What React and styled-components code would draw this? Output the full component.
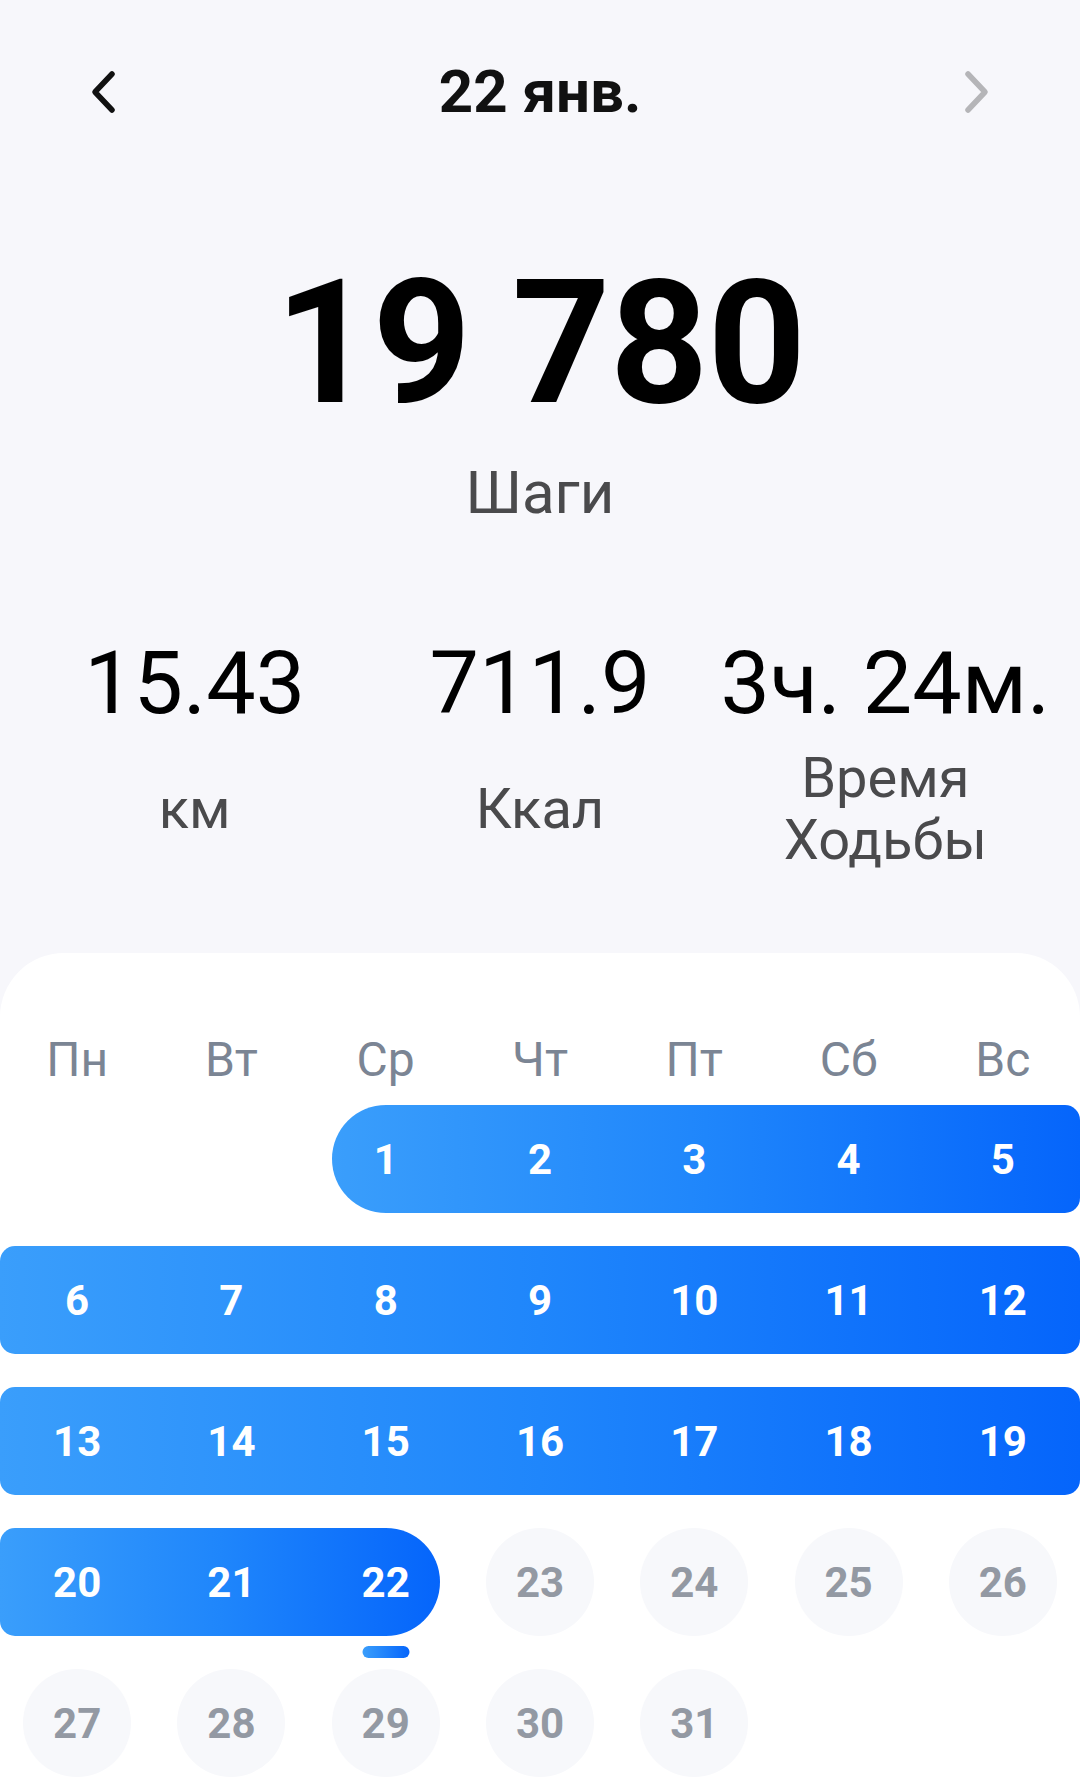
import React from 'react'
import styled, { createGlobalStyle } from 'styled-components'

const TODAY = 22
const RANGE_START = 1

const weekDays = ['Пн', 'Вт', 'Ср', 'Чт', 'Пт', 'Сб', 'Вс']

const weeks = [
  [null, null, 1, 2, 3, 4, 5],
  [6, 7, 8, 9, 10, 11, 12],
  [13, 14, 15, 16, 17, 18, 19],
  [20, 21, 22, 23, 24, 25, 26],
  [27, 28, 29, 30, 31, null, null],
]

const stats = [
  { value: '15.43', label: ['км'] },
  { value: '711.9', label: ['Ккал'] },
  { value: '3ч. 24м.', label: ['Время', 'Ходьбы'] },
]

const Chevron = ({ dir, color }) => (
  <svg width='30' height='46' viewBox='0 0 30 46'>
    <path
      d={dir === 'left' ? 'M24 5 L7 23 L24 41' : 'M6 5 L23 23 L6 41'}
      fill='none'
      stroke={color}
      strokeWidth='5.5'
      strokeLinecap='round'
      strokeLinejoin='round'
    />
  </svg>
)

const Cell = ({ day }) => {
  if (day === null) return <DayCell />
  const selected = day >= RANGE_START && day <= TODAY
  return (
    <DayCell>
      <DayNum $selected={selected}>
        {day}
        {day === TODAY && <TodayMark />}
      </DayNum>
    </DayCell>
  )
}

const WeekRow = ({ days }) => {
  const idx = days.map((d, i) => (d !== null && d <= TODAY ? i : -1)).filter(i => i >= 0)
  if (!idx.length) {
    return (
      <Week>
        {days.map((d, i) => <Cell key={i} day={d} />)}
      </Week>
    )
  }
  const first = idx[0]
  const last = idx[idx.length - 1]
  return (
    <Week>
      {days.slice(0, first).map((d, i) => <Cell key={'a' + i} day={d} />)}
      <Band
        $from={first + 1}
        $to={last + 2}
        $count={last - first + 1}
        $capStart={days[first] === RANGE_START}
        $capEnd={days[last] === TODAY}
      >
        {days.slice(first, last + 1).map(d => <Cell key={d} day={d} />)}
      </Band>
      {days.slice(last + 1).map((d, i) => <Cell key={'b' + i} day={d} />)}
    </Week>
  )
}

export default function App() {
  return (
    <>
      <GlobalStyle />
      <Page>
        <Header>
          <NavButton><Chevron dir='left' color='#111' /></NavButton>
          <Title>22 янв.</Title>
          <NavButton><Chevron dir='right' color='#b5b5b8' /></NavButton>
        </Header>

        <Steps>19 780</Steps>
        <StepsLabel>Шаги</StepsLabel>

        <Stats>
          {stats.map(s => (
            <Stat key={s.value}>
              <StatValue>{s.value}</StatValue>
              <StatLabel>
                {s.label.map(l => <span key={l}>{l}</span>)}
              </StatLabel>
            </Stat>
          ))}
        </Stats>

        <Calendar>
          <WeekHeader>
            {weekDays.map(d => <WeekDay key={d}>{d}</WeekDay>)}
          </WeekHeader>
          <Weeks>
            {weeks.map((w, i) => <WeekRow key={i} days={w} />)}
          </Weeks>
        </Calendar>
      </Page>
    </>
  )
}

const GlobalStyle = createGlobalStyle`
  body {
    margin: 0;
    background: #f7f7fb;
    font-family: Roboto, 'Noto Sans', sans-serif;
  }
`

const Page = styled.div`
  width: 1080px;
  min-height: 1788px;
  display: flex;
  flex-direction: column;
  background: #f7f7fb;
`

const Header = styled.header`
  height: 184px;
  padding: 0 88px;
  display: flex;
  align-items: center;
  justify-content: space-between;
`

const NavButton = styled.div`
  width: 30px;
  height: 46px;
  display: flex;
`

const Title = styled.h1`
  margin: 0;
  font-size: 60px;
  line-height: 60px;
  font-weight: 700;
  color: #111;
`

const Steps = styled.div`
  margin-top: 73px;
  text-align: center;
  font-size: 172px;
  line-height: 172px;
  font-weight: 700;
  color: #000;
  letter-spacing: -1px;
`

const StepsLabel = styled.div`
  margin-top: 34px;
  text-align: center;
  font-size: 60px;
  line-height: 60px;
  color: #4a4a4c;
`

const Stats = styled.div`
  margin-top: 116px;
  padding: 0 22px;
  display: grid;
  grid-template-columns: repeat(3, 1fr);
`

const Stat = styled.div`
  display: flex;
  flex-direction: column;
  align-items: center;
`

const StatValue = styled.div`
  font-size: 88px;
  line-height: 88px;
  color: #000;
  white-space: nowrap;
`

const StatLabel = styled.div`
  margin-top: 20px;
  height: 124px;
  display: flex;
  flex-direction: column;
  justify-content: center;
  align-items: center;
  font-size: 56px;
  line-height: 62px;
  color: #4a4a4c;
`

const Calendar = styled.section`
  flex: 1;
  margin-top: 82px;
  padding-top: 83px;
  background: #fff;
  border-radius: 64px 64px 0 0;
`

const WeekHeader = styled.div`
  display: grid;
  grid-template-columns: repeat(7, 1fr);
`

const WeekDay = styled.div`
  text-align: center;
  font-size: 48px;
  line-height: 48px;
  color: #7b8594;
`

const Weeks = styled.div`
  margin-top: 21px;
  display: flex;
  flex-direction: column;
  gap: 33px;
`

const Week = styled.div`
  display: grid;
  grid-template-columns: repeat(7, 1fr);
  height: 108px;
`

const Band = styled.div`
  grid-column: ${p => p.$from} / ${p => p.$to};
  position: relative;
  display: grid;
  grid-template-columns: repeat(${p => p.$count}, 1fr);

  &::before {
    content: '';
    position: absolute;
    top: 0;
    bottom: 0;
    left: ${p => (p.$capStart ? '23px' : '0')};
    right: ${p => (p.$capEnd ? '23px' : '0')};
    border-radius: ${p => {
      const l = p.$capStart ? 54 : 15
      const r = p.$capEnd ? 54 : 15
      return `${l}px ${r}px ${r}px ${l}px`
    }};
    background: linear-gradient(90deg, #3a9efb 0%, #1f86fb 50%, #0565fb 100%);
  }
`

const DayCell = styled.div`
  position: relative;
  display: flex;
  align-items: center;
  justify-content: center;
`

const DayNum = styled.div`
  position: relative;
  width: 108px;
  height: 108px;
  border-radius: 50%;
  display: flex;
  align-items: center;
  justify-content: center;
  font-size: 42px;
  font-weight: 700;
  color: ${p => (p.$selected ? '#fff' : '#9399a3')};
  background: ${p => (p.$selected ? 'transparent' : '#f7f8fb')};
`

const TodayMark = styled.span`
  position: absolute;
  top: 118px;
  left: 50%;
  transform: translateX(-50%);
  width: 47px;
  height: 12px;
  border-radius: 6px;
  background: linear-gradient(90deg, #3a9efb, #0565fb);
`
